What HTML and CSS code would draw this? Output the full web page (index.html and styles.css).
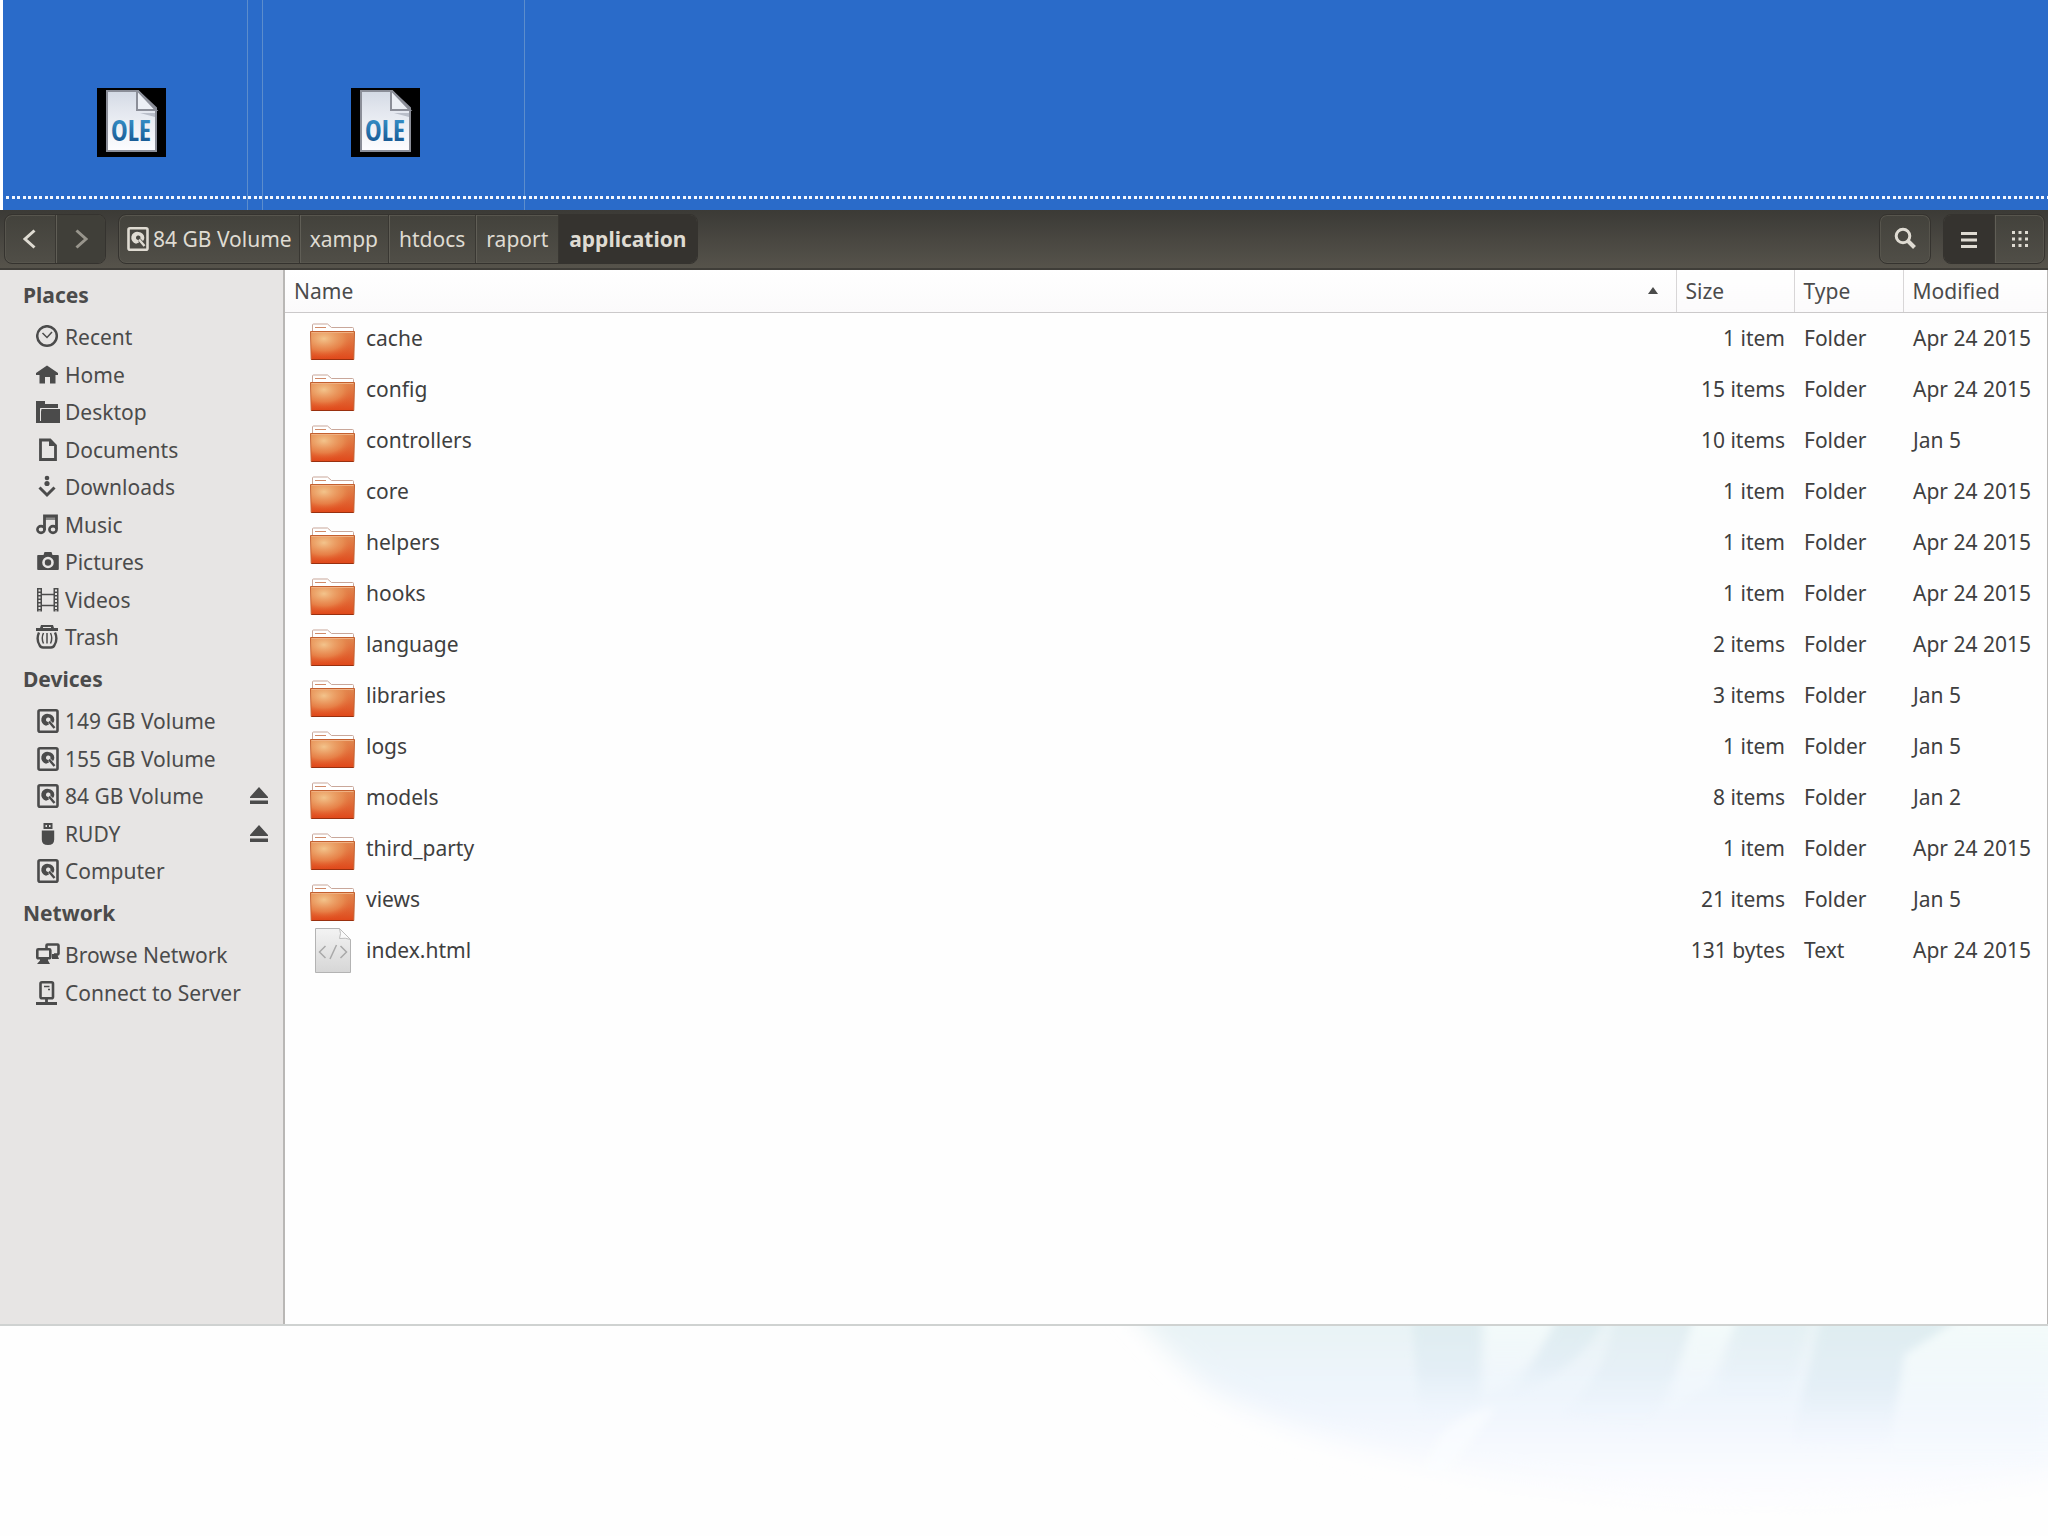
FILE: index.html
```html
<!DOCTYPE html>
<html lang="en">
<head>
<meta charset="utf-8">
<meta name="viewport" content="width=device-width, initial-scale=1">
<title>application</title>
<link rel="stylesheet" href="styles.css">
</head>
<body>
<svg class="sprites" aria-hidden="true">
  <defs>
    <linearGradient id="paper" x1="0" y1="0" x2="0" y2="1"><stop offset="0" stop-color="#d3d9e4"/><stop offset=".3" stop-color="#e2e6ee"/><stop offset="1" stop-color="#fdfdff"/></linearGradient>
    <linearGradient id="ole" x1="0" y1="0" x2="0" y2="1"><stop offset="0" stop-color="#3f9fd6"/><stop offset="1" stop-color="#0f4a86"/></linearGradient>
    <linearGradient id="folder-base" x1="0" y1="0" x2="0" y2="1"><stop offset="0" stop-color="#dd9058"/><stop offset="1" stop-color="#e0481a"/></linearGradient>
    <radialGradient id="folder-shine" cx=".3" cy=".25" r=".75"><stop offset="0" stop-color="#f3c48c"/><stop offset=".6" stop-color="#ec9356" stop-opacity=".6"/><stop offset="1" stop-color="#e8501e" stop-opacity="0"/></radialGradient>
    <linearGradient id="file-base" x1="0" y1="0" x2="0" y2="1"><stop offset="0" stop-color="#f3f3f3"/><stop offset="1" stop-color="#d6d6d6"/></linearGradient>
    <symbol id="i-ole" viewBox="0 0 69 69">
      <path fill="#000" d="M0 0h69v69H0z"/>
      <path d="M10 3h31l18 17v43H10z" fill="url(#paper)" stroke="#8b8e98" stroke-width="2"/>
      <path d="M40 3v19h19L41 3z" fill="#eceff5" stroke="#8b8e98" stroke-width="2"/>
      <path d="M43 25h15v4z" fill="#b9bec9"/>
      <text x="14" y="53" class="ole-text" fill="url(#ole)">OLE</text>
    </symbol>
    <symbol id="i-folder" viewBox="0 0 48 48">
      <path d="M3.500 18v-7q0-1 1-1h14l4 3.500h21q1 0 1 1V18z" fill="#fff" stroke="#c9a79a"/>
      <path d="M6 13.500h11" stroke="#d08a68"/>
      <path d="M1.500 17.500h44l-.7 28h-42.600z" fill="url(#folder-base)" stroke="#c4602f"/>
      <path d="M2 18h43l-.7 27h-41.600z" fill="url(#folder-shine)"/>
      <path d="M2.500 18.500h42" stroke="#f0b183"/>
      <path d="M2.500 45.500h42" stroke="#99300f"/>
    </symbol>
    <symbol id="i-html" viewBox="0 0 48 48">
      <path d="M6.500 2.500h24l11 11v33h-35z" fill="url(#file-base)" stroke="#b3b3b3"/>
      <path d="M30.500 2.500q2 5 0 10 6-1 11 1z" fill="#fafafa" stroke="#bdbdbd"/>
      <path d="m16.500 20-6 6 6 6M31.500 20l6 6-6 6M27.500 19l-6.500 14" fill="none" stroke="#a9a9a9" stroke-width="1.500"/>
    </symbol>
    <symbol id="i-recent" viewBox="0 0 24 24"><circle cx="11" cy="11" r="9.800" fill="none" stroke="currentColor" stroke-width="2.500"/><path d="m6.500 8 4.500 4.500L16 7" fill="none" stroke="currentColor" stroke-width="1.500"/></symbol>
    <symbol id="i-home" viewBox="0 0 24 24"><path fill="currentColor" d="M11 2.500 22 10v2h-2.500v8.500H14V14H9v6.500H3.500V12H0v-2z"/></symbol>
    <symbol id="i-desktop" viewBox="0 0 24 24"><path fill="currentColor" d="M0 1h9v3h13v4H4.500v15H0z"/><path fill="currentColor" d="M5.500 9H24v14H3z"/><path d="M4.500 21V8.500H21" fill="none" stroke="#e7e5e4"/></symbol>
    <symbol id="i-documents" viewBox="0 0 24 24"><path d="M4.500 2H14l5.500 5.500V21.500h-15z" fill="none" stroke="currentColor" stroke-width="2.800"/><path fill="currentColor" d="M13 1.500V8h6.500z"/></symbol>
    <symbol id="i-downloads" viewBox="0 0 24 24"><circle cx="11" cy="3" r="2.300" fill="currentColor"/><circle cx="11" cy="8.500" r="2.600" fill="currentColor"/><path d="M3.500 12.500 11 20l7.500-7.500" fill="none" stroke="currentColor" stroke-width="3"/></symbol>
    <symbol id="i-music" viewBox="0 0 24 24"><path d="M8.500 17V3h12v13" fill="none" stroke="currentColor" stroke-width="2.800"/><path d="M8 4h13v3H8z" fill="currentColor" opacity=".6"/><ellipse cx="5" cy="16.500" rx="3.600" ry="3.400" fill="none" stroke="currentColor" stroke-width="2.600"/><ellipse cx="17" cy="16.500" rx="3.600" ry="3.400" fill="none" stroke="currentColor" stroke-width="2.600"/></symbol>
    <symbol id="i-pictures" viewBox="0 0 24 24"><path fill="currentColor" fill-rule="evenodd" d="M2 5h5.500l1-3h7l1 3H22q.8 0 .8 1v13q0 1-.8 1H2q-.8 0-.8-1V6q0-1 .8-1zm10 1.700a5.800 5.800 0 1 0 0 11.600 5.800 5.800 0 0 0 0-11.600z"/><circle cx="12" cy="12.500" r="3.200" fill="currentColor"/></symbol>
    <symbol id="i-videos" viewBox="0 0 24 24"><path d="M3.500 0v23.500M20 0v23.500" stroke="currentColor" stroke-width="5"/><path d="M3.500 1.500v22M20 1.500v22" stroke="#e7e5e4" stroke-width="2" stroke-dasharray="2 1.500"/><path d="M6 6.500h12M6 17.500h12" stroke="currentColor" stroke-width="1.500"/></symbol>
    <symbol id="i-trash" viewBox="0 0 24 24"><path d="M0 3h4l1-3h12l1 3h4v3H0z" fill="currentColor"/><path d="M7 2.500h8" stroke="#e7e5e4"/><path d="M3 7.500Q0 14 3.500 20q1 2.500 3.500 2.500h8q2.500 0 3.500-2.500 3.500-6 .5-12.500" fill="none" stroke="currentColor" stroke-width="2.400"/><path d="M7.500 8Q5 13 7.500 18.500M11 8v10.500M14.500 8q2.500 5 0 10.500" fill="none" stroke="currentColor" stroke-width="1.500"/></symbol>
    <symbol id="i-drive" viewBox="0 0 24 24"><rect x="2.500" y="1.300" width="19" height="21.400" rx="1.500" fill="none" stroke="currentColor" stroke-width="2.600"/><path fill="currentColor" d="M12.500 5a5.700 5.700 0 0 1 5.800 5.700q0 2-1.300 3.300l-2.700-2.600a2.200 2.200 0 1 0-2.300 1.500l1 2.600-3 1.200A5.900 5.900 0 0 1 12.500 5z"/><path d="m13 12.500 5.500 6.500" stroke="currentColor" stroke-width="2.400"/></symbol>
    <symbol id="i-usb" viewBox="0 0 24 24"><path fill="currentColor" fill-rule="evenodd" d="M7.500 1h9v6h-9zm2 2v2h1.500V3zm3.500 0v2h1.500V3zM5.800 8.500h12.400v9q0 5.500-6.200 5.500t-6.200-5.500z"/></symbol>
    <symbol id="i-network" viewBox="0 0 24 24"><path d="M10.500 5V2.500q0-1 1-1h10q1 0 1 1v8q0 1-1 1H18" fill="none" stroke="currentColor" stroke-width="2.600"/><path fill="currentColor" d="M16 11h5l2 5h-7z"/><rect x="1.300" y="6.300" width="13" height="9" rx="1" fill="none" stroke="currentColor" stroke-width="2.600"/><path fill="currentColor" d="M4 15h8v2.500l2 3.500H1l3-3.500z"/></symbol>
    <symbol id="i-server" viewBox="0 0 24 24"><rect x="4.500" y="1.300" width="12.500" height="16" rx="1.500" fill="none" stroke="currentColor" stroke-width="2.600"/><path d="M8 5.500h5.500M12 8.500h2" stroke="currentColor" stroke-width="1.500"/><path d="M10.500 17v5M0 22.500h21" stroke="currentColor" stroke-width="2.800"/></symbol>
    <symbol id="i-eject" viewBox="0 0 18 18"><path fill="currentColor" d="M9 0 18 10v1H0v-1zM0 13.500h18v3.500H0z"/></symbol>
    <symbol id="i-back" viewBox="0 0 24 24"><path d="M16.500 3.500 7 12l9.500 8.500" fill="none" stroke="currentColor" stroke-width="3"/></symbol>
    <symbol id="i-forward" viewBox="0 0 24 24"><path d="M7.500 3.500 17 12l-9.500 8.500" fill="none" stroke="currentColor" stroke-width="3"/></symbol>
    <symbol id="i-search" viewBox="0 0 24 24"><circle cx="10" cy="9" r="6.800" fill="none" stroke="currentColor" stroke-width="3"/><path d="m15 14 6.500 6.500" stroke="currentColor" stroke-width="4"/></symbol>
    <symbol id="i-list" viewBox="0 0 24 24"><path d="M4 6.500h16M4 13h16M4 19.500h16" stroke="currentColor" stroke-width="3"/></symbol>
    <symbol id="i-grid" viewBox="0 0 24 24"><path d="M4 5.500h16M4 12h16M4 18.500h16" stroke="currentColor" stroke-width="3" stroke-dasharray="3 3.500"/></symbol>
  </defs>
</svg>

<header class="desktop">
  <div class="cell first"><svg class="ole-icon" role="img" aria-label="OLE object"><use href="#i-ole"/></svg></div>
  <div class="gutter"></div>
  <div class="cell second"><svg class="ole-icon" role="img" aria-label="OLE object"><use href="#i-ole"/></svg></div>
  <div class="dots"></div>
</header>

<div class="toolbar">
  <div class="group">
    <button class="tool" aria-label="Back"><svg class="icon"><use href="#i-back"/></svg></button>
    <button class="tool dim" aria-label="Forward"><svg class="icon"><use href="#i-forward"/></svg></button>
  </div>
  <nav class="group path" aria-label="Path">
    <button class="crumb"><svg class="icon"><use href="#i-drive"/></svg>84 GB Volume</button>
    <button class="crumb">xampp</button>
    <button class="crumb">htdocs</button>
    <button class="crumb">raport</button>
    <button class="crumb active" aria-current="page">application</button>
  </nav>
  <div class="group search"><button class="tool" aria-label="Search"><svg class="icon"><use href="#i-search"/></svg></button></div>
  <div class="group">
    <button class="tool active" aria-label="List view"><svg class="icon"><use href="#i-list"/></svg></button>
    <button class="tool" aria-label="Icon view"><svg class="icon"><use href="#i-grid"/></svg></button>
  </div>
</div>

<div class="window">
  <aside class="sidebar">
    <h2>Places</h2>
    <ul>
      <li><a href="#"><svg class="icon"><use href="#i-recent"/></svg>Recent</a></li>
      <li><a href="#"><svg class="icon"><use href="#i-home"/></svg>Home</a></li>
      <li><a href="#"><svg class="icon"><use href="#i-desktop"/></svg>Desktop</a></li>
      <li><a href="#"><svg class="icon"><use href="#i-documents"/></svg>Documents</a></li>
      <li><a href="#"><svg class="icon"><use href="#i-downloads"/></svg>Downloads</a></li>
      <li><a href="#"><svg class="icon"><use href="#i-music"/></svg>Music</a></li>
      <li><a href="#"><svg class="icon"><use href="#i-pictures"/></svg>Pictures</a></li>
      <li><a href="#"><svg class="icon"><use href="#i-videos"/></svg>Videos</a></li>
      <li><a href="#"><svg class="icon"><use href="#i-trash"/></svg>Trash</a></li>
    </ul>
    <h2>Devices</h2>
    <ul>
      <li><a href="#"><svg class="icon"><use href="#i-drive"/></svg>149 GB Volume</a></li>
      <li><a href="#"><svg class="icon"><use href="#i-drive"/></svg>155 GB Volume</a></li>
      <li><a href="#"><svg class="icon"><use href="#i-drive"/></svg>84 GB Volume</a><button class="eject" aria-label="Eject 84 GB Volume"><svg><use href="#i-eject"/></svg></button></li>
      <li><a href="#"><svg class="icon"><use href="#i-usb"/></svg>RUDY</a><button class="eject" aria-label="Eject RUDY"><svg><use href="#i-eject"/></svg></button></li>
      <li><a href="#"><svg class="icon"><use href="#i-drive"/></svg>Computer</a></li>
    </ul>
    <h2>Network</h2>
    <ul>
      <li><a href="#"><svg class="icon"><use href="#i-network"/></svg>Browse Network</a></li>
      <li><a href="#"><svg class="icon"><use href="#i-server"/></svg>Connect to Server</a></li>
    </ul>
  </aside>
  <main class="files">
    <table>
      <thead>
        <tr><th class="name" aria-sort="ascending"><span class="sorted">Name<span class="arrow"></span></span></th><th class="size">Size</th><th class="type">Type</th><th class="modified">Modified</th></tr>
      </thead>
      <tbody>
        <tr><td><span class="entry"><svg><use href="#i-folder"/></svg>cache</span></td><td>1 item</td><td>Folder</td><td>Apr 24 2015</td></tr>
        <tr><td><span class="entry"><svg><use href="#i-folder"/></svg>config</span></td><td>15 items</td><td>Folder</td><td>Apr 24 2015</td></tr>
        <tr><td><span class="entry"><svg><use href="#i-folder"/></svg>controllers</span></td><td>10 items</td><td>Folder</td><td>Jan 5</td></tr>
        <tr><td><span class="entry"><svg><use href="#i-folder"/></svg>core</span></td><td>1 item</td><td>Folder</td><td>Apr 24 2015</td></tr>
        <tr><td><span class="entry"><svg><use href="#i-folder"/></svg>helpers</span></td><td>1 item</td><td>Folder</td><td>Apr 24 2015</td></tr>
        <tr><td><span class="entry"><svg><use href="#i-folder"/></svg>hooks</span></td><td>1 item</td><td>Folder</td><td>Apr 24 2015</td></tr>
        <tr><td><span class="entry"><svg><use href="#i-folder"/></svg>language</span></td><td>2 items</td><td>Folder</td><td>Apr 24 2015</td></tr>
        <tr><td><span class="entry"><svg><use href="#i-folder"/></svg>libraries</span></td><td>3 items</td><td>Folder</td><td>Jan 5</td></tr>
        <tr><td><span class="entry"><svg><use href="#i-folder"/></svg>logs</span></td><td>1 item</td><td>Folder</td><td>Jan 5</td></tr>
        <tr><td><span class="entry"><svg><use href="#i-folder"/></svg>models</span></td><td>8 items</td><td>Folder</td><td>Jan 2</td></tr>
        <tr><td><span class="entry"><svg><use href="#i-folder"/></svg>third_party</span></td><td>1 item</td><td>Folder</td><td>Apr 24 2015</td></tr>
        <tr><td><span class="entry"><svg><use href="#i-folder"/></svg>views</span></td><td>21 items</td><td>Folder</td><td>Jan 5</td></tr>
        <tr><td><span class="entry"><svg><use href="#i-html"/></svg>index.html</span></td><td>131 bytes</td><td>Text</td><td>Apr 24 2015</td></tr>
      </tbody>
    </table>
  </main>
</div>

<footer class="wallpaper">
  <svg viewBox="0 0 948 210" aria-hidden="true">
    <defs>
      <linearGradient id="wash" x1="0" y1="0" x2="0" y2="1"><stop offset="0" stop-color="#e6f2f2"/><stop offset=".5" stop-color="#eff5fd"/><stop offset=".95" stop-color="#fdfdff"/></linearGradient>
      <linearGradient id="streak" x1="0" y1="0" x2="0" y2="1"><stop offset="0" stop-color="#dcecee"/><stop offset=".5" stop-color="#e1edf5"/><stop offset="1" stop-color="#eff5fd" stop-opacity="0"/></linearGradient>
      <linearGradient id="glow" x1="0" y1="0" x2="0" y2="1"><stop offset="0" stop-color="#f3fbfa"/><stop offset="1" stop-color="#f6faff" stop-opacity=".2"/></linearGradient>
      <filter id="soft" x="-10%" y="-10%" width="120%" height="120%"><feGaussianBlur stdDeviation="12"/></filter>
      <filter id="edge" x="-10%" y="-10%" width="120%" height="120%"><feGaussianBlur stdDeviation="4"/></filter>
    </defs>
    <path filter="url(#soft)" fill="url(#wash)" d="M20-30h940v180q-120 30-300 30-160 0-300-35Q190 110 105 60 60 20 20-30z"/>
    <g filter="url(#edge)">
      <path fill="url(#streak)" d="M312-8h68v88l-60 20z" opacity=".8"/>
      <path fill="url(#streak)" d="M460-8h44q-10 30-60 65l-45 25q35-40 61-90z" opacity=".8"/>
      <path fill="url(#streak)" d="M515-8h78q-20 60-45 118l-90-20q50-40 57-98z" opacity=".5"/>
      <path fill="url(#streak)" d="M640-8h70l-26 95h-74z" opacity=".4"/>
      <path fill="url(#streak)" d="M722-8h150q-30 20-68 36l-14 100-100-8z" opacity=".8"/>
      <path fill="url(#glow)" d="M386-8h68q-20 50-68 78z"/>
      <path fill="url(#glow)" d="M595-8h42l-28 66-42 30z"/>
      <path fill="#fbfeff" d="M340 110q24-26 56-28l-50 66-28 2z" opacity=".6"/>
      <path fill="url(#glow)" d="M806 28 860-8h100v150H785z"/>
    </g>
  </svg>
</footer>
</body>
</html>
```
FILE: styles.css
```css
* { box-sizing: border-box; }

body {
  margin: 0;
  min-height: 100vh;
  display: flex;
  flex-direction: column;
  background: #fefefe;
  color: #4b4b4b;
  font: 21px/28px "Noto Sans", "Open Sans", sans-serif;
}

button {
  margin: 0;
  padding: 0;
  border: 0;
  background: none;
  color: inherit;
  font: inherit;
}

a { color: inherit; text-decoration: none; }

.sprites { position: absolute; width: 0; height: 0; }

.icon { width: 24px; height: 24px; flex: none; }

/* Desktop strip */
.desktop {
  position: relative;
  display: flex;
  height: 210px;
  border-left: 3px solid #fff;
  background: #2a6bc9;
}
.cell { border-right: 1px solid #5c8dcc; padding-top: 88px; }
.first { width: 245px; padding-left: 94px; }
.second { width: 262px; padding-left: 88px; }
.gutter { width: 15px; border-right: 1px solid #5c8dcc; }
.ole-icon { display: block; width: 69px; height: 69px; }
.ole-text { font: bold 28px "Open Sans Condensed", "DejaVu Sans Condensed", sans-serif; }
.dots {
  position: absolute;
  left: 3px;
  right: 0;
  bottom: 11px;
  height: 3px;
  background: repeating-linear-gradient(90deg, #f2f7ff 0 3px, transparent 3px 6px, #f2f7ff 6px 9px, transparent 9px 11px);
}

/* Toolbar */
.toolbar {
  display: flex;
  align-items: center;
  gap: 12px;
  height: 60px;
  padding: 0 3px 0 4px;
  border-bottom: 2px solid #3f3d38;
  background: linear-gradient(#3b3a36, #56534b);
  color: #dfdbd2;
}
.group {
  display: flex;
  height: 50px;
  border: 1px solid #35332f;
  border-radius: 8px;
  overflow: hidden;
  background: linear-gradient(#43423c, #504e47);
  box-shadow: inset 0 0 0 1px #57554d;
}
.tool {
  display: flex;
  align-items: center;
  justify-content: center;
  width: 50px;
}
.tool + .tool, .crumb + .crumb { border-left: 1px solid #393732; box-shadow: inset 1px 0 #605e56; }
.dim { color: #98958c; background: #403f39; }
.search { margin-left: auto; }
.crumb { display: flex; align-items: center; gap: 3px; padding: 0 10px; }
.crumb:first-child { padding: 0 7px; }
.tool.active, .crumb.active { background: #35332f; box-shadow: none; }
.crumb.active { font-weight: bold; }

/* Window */
.window { flex: 1; display: flex; border-bottom: 2px solid #cfd2d1; }

.sidebar {
  flex: none;
  width: 285px;
  padding-top: 2px;
  border-right: 2px solid #b9b7b5;
  background: #e7e5e4;
}
.sidebar h2 {
  margin: 0;
  padding-left: 23px;
  font-size: 21px;
  line-height: 46px;
}
.sidebar ul { margin: 0; padding: 0; list-style: none; }
.sidebar li {
  display: flex;
  align-items: center;
  justify-content: space-between;
  height: 38px;
  padding: 0 15px 0 36px;
}
.sidebar li:nth-child(even) { height: 37px; }
.sidebar a { display: flex; align-items: center; gap: 5px; white-space: nowrap; }
.eject svg { display: block; width: 18px; height: 18px; }

.files { flex: 1; background: #fefefe; border-right: 1px solid #b9b7b5; }
table { width: 100%; table-layout: fixed; border-collapse: collapse; white-space: nowrap; }
th {
  height: 42px;
  padding: 0 9px;
  border-bottom: 1px solid #cbc9ca;
  background: linear-gradient(#fff, #fbfafb);
  font-weight: normal;
  text-align: left;
}
th + th { border-left: 1px solid #d8d6d7; }
.size { width: 118px; }
.type { width: 109px; }
.modified { width: 144px; }
.sorted { display: flex; align-items: center; justify-content: space-between; padding-right: 9px; }
.arrow { border: 5px solid transparent; border-top: 0; border-bottom: 7px solid #4b4b4b; }
td { height: 51px; padding: 0 9px 0 10px; color: #3f3f3f; }
td:first-child { padding-left: 24px; }
td:nth-child(2) { text-align: right; }
.entry { display: flex; align-items: center; gap: 9px; }
.entry svg { width: 48px; height: 48px; flex: none; }

.wallpaper { display: flex; justify-content: flex-end; height: 210px; overflow: hidden; }
.wallpaper svg { width: 948px; height: 210px; }
```
